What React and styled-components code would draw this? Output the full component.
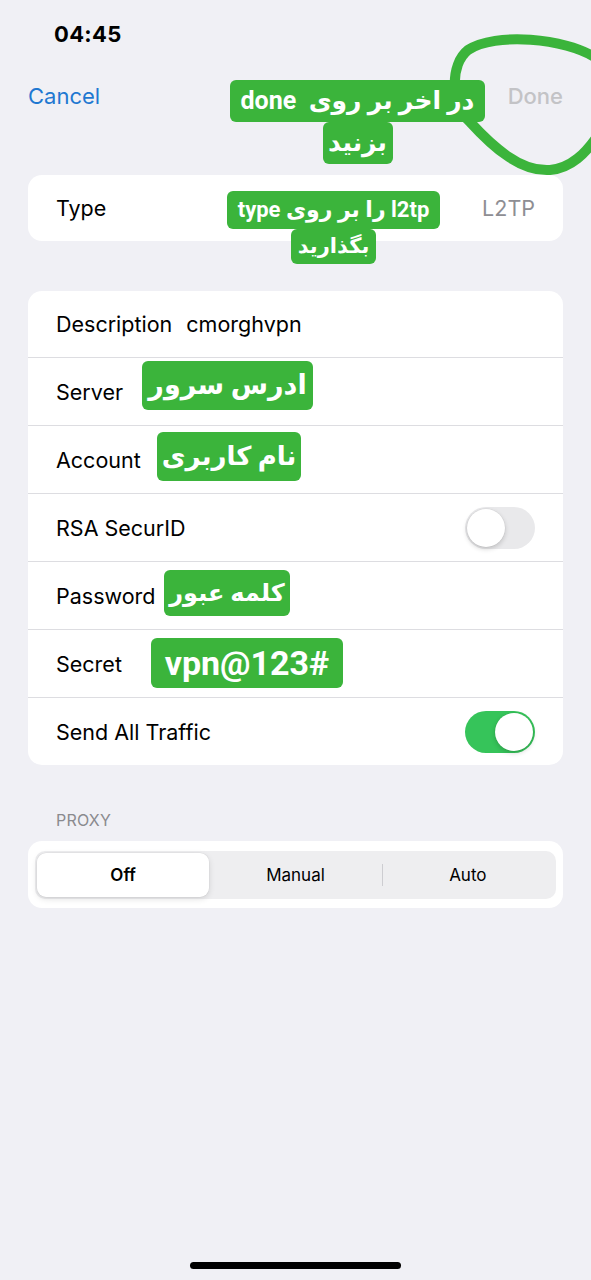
import React from "react";
import styled, { createGlobalStyle } from "styled-components";

const GlobalStyle = createGlobalStyle`
  html, body {
    margin: 0;
    padding: 0;
    background: #f0f0f5;
  }
  body {
    font-family: "Inter", "Liberation Sans", sans-serif;
    color: #000;
  }
`;

const Screen = styled.div`
  position: relative;
  width: 591px;
  min-height: 1280px;
  display: flex;
  flex-direction: column;
  background: #f0f0f5;
  overflow: hidden;
`;

const StatusBar = styled.div`
  height: 68px;
  display: flex;
  align-items: center;
  padding-left: 54px;
  font-size: 22px;
  font-weight: 700;
  letter-spacing: 0.3px;
`;

const NavBar = styled.div`
  height: 56px;
  display: flex;
  align-items: center;
  justify-content: space-between;
  padding: 0 28px;
  margin-bottom: 51px;
  font-size: 22px;
`;

const NavButton = styled.span`
  color: ${(p) => (p.$disabled ? "#c3c3c6" : "#1f78d1")};
  font-weight: ${(p) => (p.$disabled ? 500 : 400)};
`;

const Content = styled.div`
  display: flex;
  flex-direction: column;
  padding: 0 28px;
`;

const Card = styled.div`
  background: #fff;
  border-radius: 14px;
  margin-bottom: ${(p) => p.$gap || 0}px;
  overflow: hidden;
`;

const Row = styled.div`
  height: ${(p) => p.$h || 67}px;
  display: flex;
  align-items: center;
  padding: 0 28px;
  font-size: 21.5px;

  & + & {
    border-top: 1px solid #dddde1;
  }
`;

const Label = styled.span`
  flex: 0 0 auto;
  margin-right: 14px;
`;

const Value = styled.span`
  flex: 1;
  color: ${(p) => (p.$muted ? "#8e8e93" : "#000")};
  text-align: ${(p) => (p.$right ? "right" : "left")};
`;

const Switch = styled.div`
  width: 70px;
  height: 42px;
  border-radius: 21px;
  background: ${(p) => (p.$on ? "#36c45a" : "#e9e9eb")};
  display: flex;
  align-items: center;
  justify-content: ${(p) => (p.$on ? "flex-end" : "flex-start")};
  padding: 2px;
  box-sizing: border-box;
  margin-left: auto;
`;

const Knob = styled.div`
  width: 38px;
  height: 38px;
  border-radius: 50%;
  background: #fff;
  box-shadow: 0 2px 5px rgba(0, 0, 0, 0.18), 0 0 0 0.5px rgba(0, 0, 0, 0.06);
`;

const SectionHeader = styled.div`
  margin: 45px 0 11px 28px;
  height: 20px;
  line-height: 20px;
  font-size: 16px;
  color: #8a8a8e;
  letter-spacing: 0.2px;
`;

const ProxyCard = styled.div`
  background: #fff;
  border-radius: 14px;
  padding: 10px 7px 9px;
`;

const Segmented = styled.div`
  display: grid;
  grid-template-columns: repeat(3, 1fr);
  height: 48px;
  border-radius: 10px;
  background: #eeeef0;
  padding: 2px;
  box-sizing: border-box;
`;

const Segment = styled.div`
  display: flex;
  align-items: center;
  justify-content: center;
  font-size: 17px;
  font-weight: ${(p) => (p.$active ? 600 : 400)};
  border-radius: 9px;
  background: ${(p) => (p.$active ? "#fff" : "transparent")};
  box-shadow: ${(p) =>
    p.$active ? "0 2px 6px rgba(0,0,0,0.12), 0 0 0 0.5px rgba(0,0,0,0.05)" : "none"};
  position: relative;

  &::before {
    content: "";
    display: ${(p) => (p.$divider ? "block" : "none")};
    position: absolute;
    left: 0;
    top: 11px;
    bottom: 11px;
    width: 1px;
    background: #cdcdd1;
  }
`;

const HomeIndicator = styled.div`
  margin: auto auto 11px;
  width: 211px;
  height: 7px;
  border-radius: 4px;
  background: #000;
`;

/* annotation layer drawn over the screenshot */
const Note = styled.div`
  position: absolute;
  top: ${(p) => p.$top}px;
  left: ${(p) => p.$left}px;
  display: flex;
  flex-direction: column;
  align-items: center;
  direction: rtl;
  z-index: 2;
`;

const NoteLine = styled.span`
  display: block;
  background: #3bb43b;
  color: #fff;
  font-family: "Roboto", "DejaVu Sans", sans-serif;
  font-weight: 700;
  font-size: ${(p) => p.$size || 26}px;
  height: ${(p) => p.$h}px;
  line-height: ${(p) => p.$h}px;
  width: ${(p) => p.$w}px;
  text-align: center;
  white-space: nowrap;
  border-radius: 6px;
`;

const Scribble = styled.svg`
  position: absolute;
  top: 0;
  left: 0;
  z-index: 1;
  pointer-events: none;
`;

export default function App() {
  return (
    <>
      <GlobalStyle />
      <Screen>
        <StatusBar>04:45</StatusBar>
        <NavBar>
          <NavButton>Cancel</NavButton>
          <NavButton $disabled>Done</NavButton>
        </NavBar>

        <Content>
          <Card $gap={50}>
            <Row $h={66}>
              <Label>Type</Label>
              <Value $muted $right>L2TP</Value>
            </Row>
          </Card>

          <Card>
            <Row $h={66}>
              <Label>Description</Label>
              <Value>cmorghvpn</Value>
            </Row>
            <Row>
              <Label>Server</Label>
            </Row>
            <Row>
              <Label>Account</Label>
            </Row>
            <Row>
              <Label>RSA SecurID</Label>
              <Switch>
                <Knob />
              </Switch>
            </Row>
            <Row>
              <Label>Password</Label>
            </Row>
            <Row>
              <Label>Secret</Label>
            </Row>
            <Row>
              <Label>Send All Traffic</Label>
              <Switch $on>
                <Knob />
              </Switch>
            </Row>
          </Card>

          <SectionHeader>PROXY</SectionHeader>
          <ProxyCard>
            <Segmented>
              <Segment $active>Off</Segment>
              <Segment>Manual</Segment>
              <Segment $divider>Auto</Segment>
            </Segmented>
          </ProxyCard>
        </Content>

        <HomeIndicator />

        <Scribble width="591" height="200" viewBox="0 0 591 200">
          <path
            d="M596 58 C565 38 495 32 468 50 C450 64 450 104 470 122 C492 146 520 172 550 170 C572 168 586 152 596 138"
            fill="none"
            stroke="#3bb43b"
            strokeWidth="10"
            strokeLinecap="round"
          />
        </Scribble>

        <Note $top={80} $left={230}>
          <NoteLine $w={255} $h={42} $size={25}>در اخر بر روی&nbsp;&nbsp;done</NoteLine>
          <NoteLine $w={70} $h={42} $size={25}>بزنید</NoteLine>
        </Note>
        <Note $top={191} $left={227}>
          <NoteLine $w={213} $h={38} $size={22}>l2tp را بر روی type</NoteLine>
          <NoteLine $w={85} $h={35} $size={21}>بگذارید</NoteLine>
        </Note>
        <Note $top={361} $left={142}>
          <NoteLine $w={171} $h={49} $size={27}>ادرس سرور</NoteLine>
        </Note>
        <Note $top={432} $left={157}>
          <NoteLine $w={144} $h={49} $size={26}>نام کاربری</NoteLine>
        </Note>
        <Note $top={570} $left={164}>
          <NoteLine $w={126} $h={46} $size={24}>کلمه عبور</NoteLine>
        </Note>
        <Note $top={638} $left={151}>
          <NoteLine $w={192} $h={50} $size={34}>vpn@123#</NoteLine>
        </Note>
      </Screen>
    </>
  );
}
